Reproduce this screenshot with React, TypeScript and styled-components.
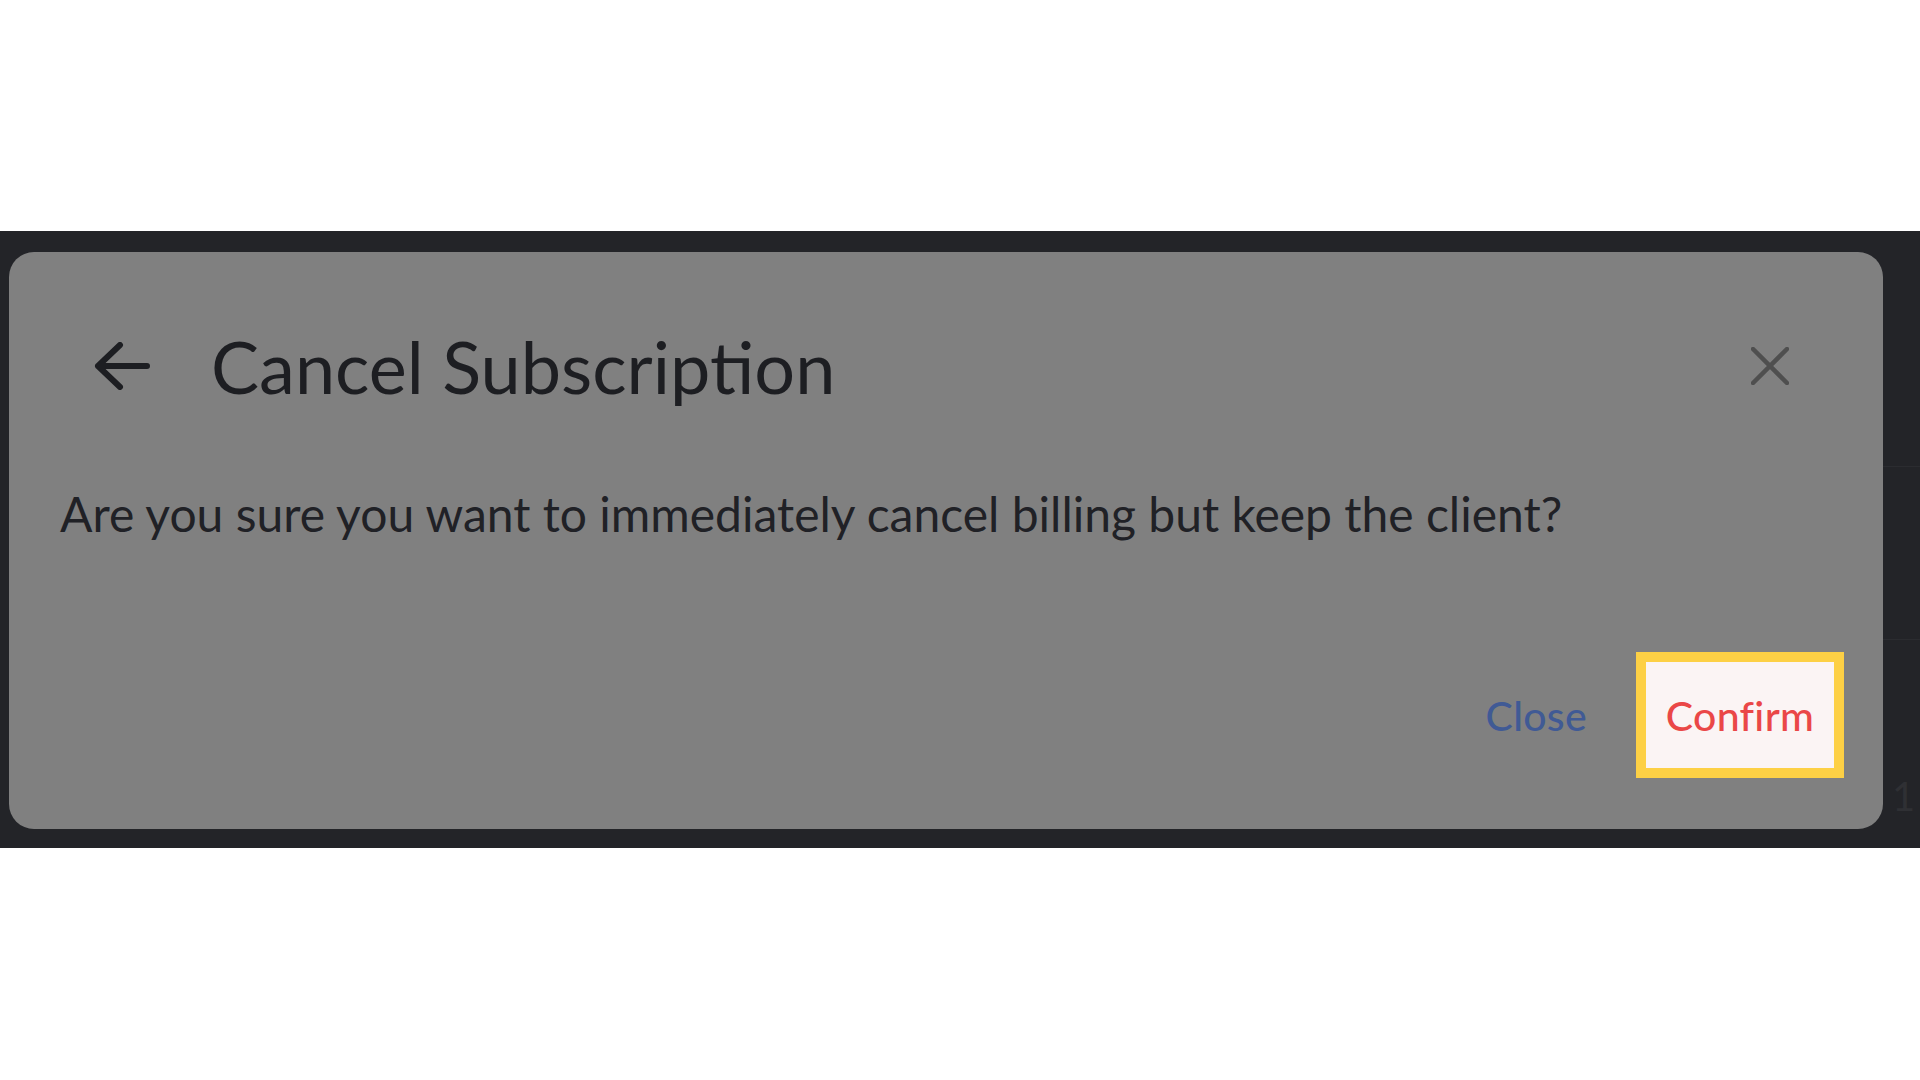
import styled, { createGlobalStyle } from 'styled-components';

const GlobalStyle = createGlobalStyle`
  html, body {
    margin: 0;
    padding: 0;
    background: #ffffff;
  }
  body {
    font-family: 'Lato', 'Noto Sans', sans-serif;
  }
`;

const BackIcon = () => (
  <svg width="56" height="48" viewBox="0 0 56 48" fill="none">
    <path
      d="M53 24H4M26 3L4 24L26 45"
      stroke="#1d1e22"
      strokeWidth="6"
      strokeLinecap="round"
      strokeLinejoin="round"
    />
  </svg>
);

const CloseIcon = () => (
  <svg width="38" height="38" viewBox="0 0 38 38" fill="none">
    <path d="M2 2L36 36M36 2L2 36" stroke="#4f4f4f" strokeWidth="4.5" strokeLinecap="round" />
  </svg>
);

const App: React.FC = () => {
  return (
    <Page>
      <GlobalStyle />
      <Band>
        <Modal>
          <Header>
            <IconButton aria-label="back">
              <BackIcon />
            </IconButton>
            <Title>Cancel Subscription</Title>
            <Dismiss aria-label="close">
              <CloseIcon />
            </Dismiss>
          </Header>
          <Message>Are you sure you want to immediately cancel billing but keep the client?</Message>
          <Footer>
            <TextButton>Close</TextButton>
            <Highlight>
              <TextButton $danger>Confirm</TextButton>
            </Highlight>
          </Footer>
        </Modal>
        <SideStrip>
          <StripRow $height={236} />
          <StripRow $height={173} />
          <StripCell>1 r</StripCell>
        </SideStrip>
      </Band>
    </Page>
  );
};

export default App;

const Page = styled.div`
  width: 1920px;
  height: 1080px;
  padding-top: 231px;
  box-sizing: border-box;
  background: #ffffff;
  overflow: hidden;
`;

const Band = styled.div`
  display: flex;
  height: 617px;
  background: #232428;
  padding: 21px 0 19px 9px;
  box-sizing: border-box;
`;

const Modal = styled.div`
  width: 1874px;
  height: 577px;
  flex-shrink: 0;
  background: #808080;
  border-radius: 25px;
  display: flex;
  flex-direction: column;
  box-sizing: border-box;
  padding: 64px 0 51px 0;
`;

const Header = styled.div`
  display: flex;
  align-items: center;
  height: 100px;
  padding: 0 94px 0 85px;
`;

const IconButton = styled.button`
  background: none;
  border: none;
  padding: 0;
  display: flex;
  align-items: center;
  width: 56px;
  height: 48px;
  cursor: pointer;
`;

const Title = styled.h2`
  margin: 0 0 0 61px;
  flex: 1;
  font-family: 'Lato', 'Noto Sans', sans-serif;
  font-weight: 400;
  font-size: 72px;
  line-height: 100px;
  color: #1d1e22;
`;

const Dismiss = styled(IconButton)`
  width: 38px;
  height: 38px;
`;

const Message = styled.p`
  margin: 68px 0 0 51px;
  font-family: 'Lato', 'Noto Sans', sans-serif;
  font-size: 48px;
  line-height: 60px;
  color: #202126;
`;

const Footer = styled.div`
  margin-top: auto;
  display: flex;
  justify-content: flex-end;
  align-items: center;
  gap: 49px;
  padding-right: 39px;
`;

const Highlight = styled.div`
  width: 208px;
  height: 126px;
  box-sizing: border-box;
  border: 10px solid #fdd045;
  background: #fbf4f4;
  display: flex;
  align-items: center;
  justify-content: center;
`;

const TextButton = styled.button<{ $danger?: boolean }>`
  background: none;
  border: none;
  padding: 0;
  font-family: 'Lato', 'Noto Sans', sans-serif;
  font-size: 41px;
  font-weight: 500;
  letter-spacing: 0.3px;
  color: ${(p) => (p.$danger ? '#ea4747' : '#405a95')};
  cursor: pointer;
`;

const SideStrip = styled.div`
  flex: 1;
  min-width: 0;
  margin: -21px 0 -19px 0;
  display: flex;
  flex-direction: column;
  overflow: hidden;
`;

const StripRow = styled.div<{ $height: number }>`
  height: ${(p) => p.$height}px;
  flex-shrink: 0;
  border-bottom: 1px solid #2b2c30;
  box-sizing: border-box;
`;

const StripCell = styled.div`
  padding: 132px 0 0 9px;
  font-family: 'Lato', sans-serif;
  font-size: 40px;
  line-height: 48px;
  color: #2f3034;
  white-space: nowrap;
`;
